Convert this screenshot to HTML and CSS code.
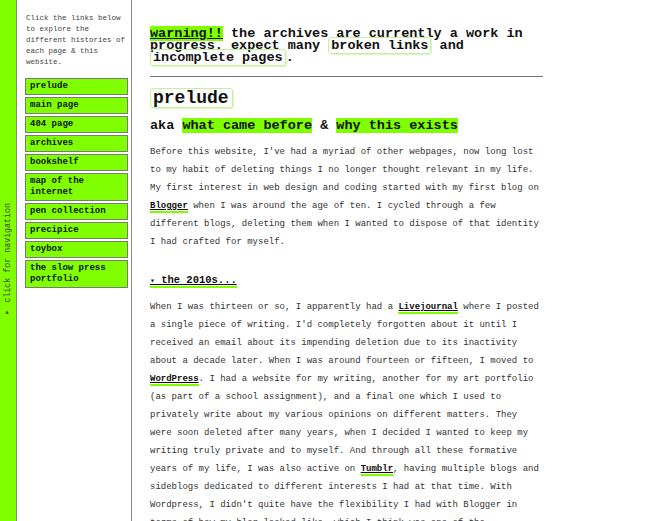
FILE: index.html
```html
<!DOCTYPE html>
<html lang="en">
<head>
<meta charset="utf-8">
<title>prelude</title>
<link rel="stylesheet" href="styles.css">
</head>
<body>
<div class="page">
  <div class="tab"><span class="tab-label">&#9662; click for navigation</span></div>
  <nav class="sidebar">
    <p class="intro">Click the links below to explore the different histories of each page &amp; this website.</p>
    <ul class="nav">
      <li><a class="nav-btn" href="#">prelude</a></li>
      <li><a class="nav-btn" href="#">main page</a></li>
      <li><a class="nav-btn" href="#">404 page</a></li>
      <li><a class="nav-btn" href="#">archives</a></li>
      <li><a class="nav-btn" href="#">bookshelf</a></li>
      <li><a class="nav-btn" href="#">map of the internet</a></li>
      <li><a class="nav-btn" href="#">pen collection</a></li>
      <li><a class="nav-btn" href="#">precipice</a></li>
      <li><a class="nav-btn" href="#">toybox</a></li>
      <li><a class="nav-btn" href="#">the slow press portfolio</a></li>
    </ul>
  </nav>
  <main class="main">
    <div class="content">
      <p class="warning"><span class="hl ul">warning!!</span> the archives are currently a work in progress. expect many <span class="boxed">broken links</span> and <span class="boxed">incomplete pages</span>.</p>
      <hr class="rule">
      <h1 class="title"><span class="boxed">prelude</span></h1>
      <h2 class="aka">aka <span class="hl">what came before</span> &amp; <span class="hl">why this exists</span></h2>
      <p class="text">Before this website, I've had a myriad of other webpages, now long lost to my habit of deleting things I no longer thought relevant in my life. My first interest in web design and coding started with my first blog on <a class="link" href="#">Blogger</a> when I was around the age of ten. I cycled through a few different blogs, deleting them when I wanted to dispose of that identity I had crafted for myself.</p>
      <p class="summary"><span class="summary-label"><span class="arrow">&#9662;</span> the 2010s...</span></p>
      <p class="text">When I was thirteen or so, I apparently had a <a class="link" href="#">Livejournal</a> where I posted a single piece of writing. I'd completely forgotten about it until I received an email about its impending deletion due to its inactivity about a decade later. When I was around fourteen or fifteen, I moved to <a class="link" href="#">WordPress</a>. I had a website for my writing, another for my art portfolio (as part of a school assignment), and a final one which I used to privately write about my various opinions on different matters. They were soon deleted after many years, when I decided I wanted to keep my writing truly private and to myself. And through all these formative years of my life, I was also active on <a class="link" href="#">Tumblr</a>, having multiple blogs and sideblogs dedicated to different interests I had at that time. With Wordpress, I didn't quite have the flexibility I had with Blogger in terms of how my blog looked like, which I think was one of the contributing factors to my eventual loss of interest in it.</p>
    </div>
  </main>
</div>
</body>
</html>
```
FILE: styles.css
```css
html, body {
  margin: 0;
  padding: 0;
  height: 100%;
  overflow: hidden;
  background: #fff;
}

body {
  font-family: "Liberation Mono", "Courier New", monospace;
  color: #222;
}

.page {
  display: flex;
  height: 100vh;
}

.tab {
  flex: 0 0 16px;
  background: #7fff00;
  border-right: 1px solid #8a8a8a;
  display: flex;
  align-items: center;
  justify-content: center;
}

.tab-label {
  writing-mode: vertical-rl;
  transform: rotate(180deg);
  font-size: 8.3px;
  color: #444;
  white-space: nowrap;
}

.sidebar {
  flex: 0 0 115px;
  box-sizing: border-box;
  border-right: 1px solid #8a8a8a;
  padding: 13px 3px 0 8px;
}

.intro {
  margin: 0 0 10px;
  padding-left: 1px;
  font-size: 7.5px;
  line-height: 11px;
  color: #444;
}

.nav {
  list-style: none;
  margin: 0;
  padding: 0;
}

.nav li {
  margin-bottom: 2px;
}

.nav-btn {
  display: block;
  background: #7fff00;
  border: 1px solid #7a7a7a;
  padding: 2px 4px;
  font-size: 9px;
  line-height: 11px;
  font-weight: bold;
  color: #111;
  text-decoration: none;
}

.main {
  flex: 1;
  padding: 28px 0 0 18px;
}

.content {
  width: 393px;
}

.warning {
  margin: 0;
  font-size: 13.5px;
  line-height: 12px;
  font-weight: bold;
  color: #111;
}

.hl {
  background: #7fff00;
}

.ul {
  text-decoration: underline;
}

.boxed {
  border: 1px solid #c6f09c;
  border-radius: 3px;
  padding: 0 2px;
  box-shadow: 1px 1px 0 #dcf7c4;
}

.rule {
  border: 0;
  border-top: 1px solid #777;
  margin: 12px 0 11px;
  height: 0;
}

.title {
  margin: 0;
  font-size: 18px;
  line-height: 20px;
  font-weight: bold;
  color: #111;
}

.title .boxed {
  display: inline-block;
  padding: 0 3px 0 2px;
  line-height: 18px;
}

.aka {
  margin: 9px 0 9px;
  font-size: 13.5px;
  line-height: 17px;
  font-weight: bold;
  color: #111;
}

.text {
  margin: 0;
  font-size: 9px;
  line-height: 18px;
  color: #333;
}

.link {
  color: #111;
  font-weight: bold;
  text-decoration: underline;
  text-underline-offset: 1px;
  border-bottom: 2px solid #7fff00;
}

.summary {
  margin: 22px 0 10px;
  font-size: 10.5px;
  line-height: 14px;
  font-weight: bold;
  color: #111;
}

.summary-label {
  text-decoration: underline;
  border-bottom: 2px solid #7fff00;
}

.arrow {
  font-size: 8px;
}
```
